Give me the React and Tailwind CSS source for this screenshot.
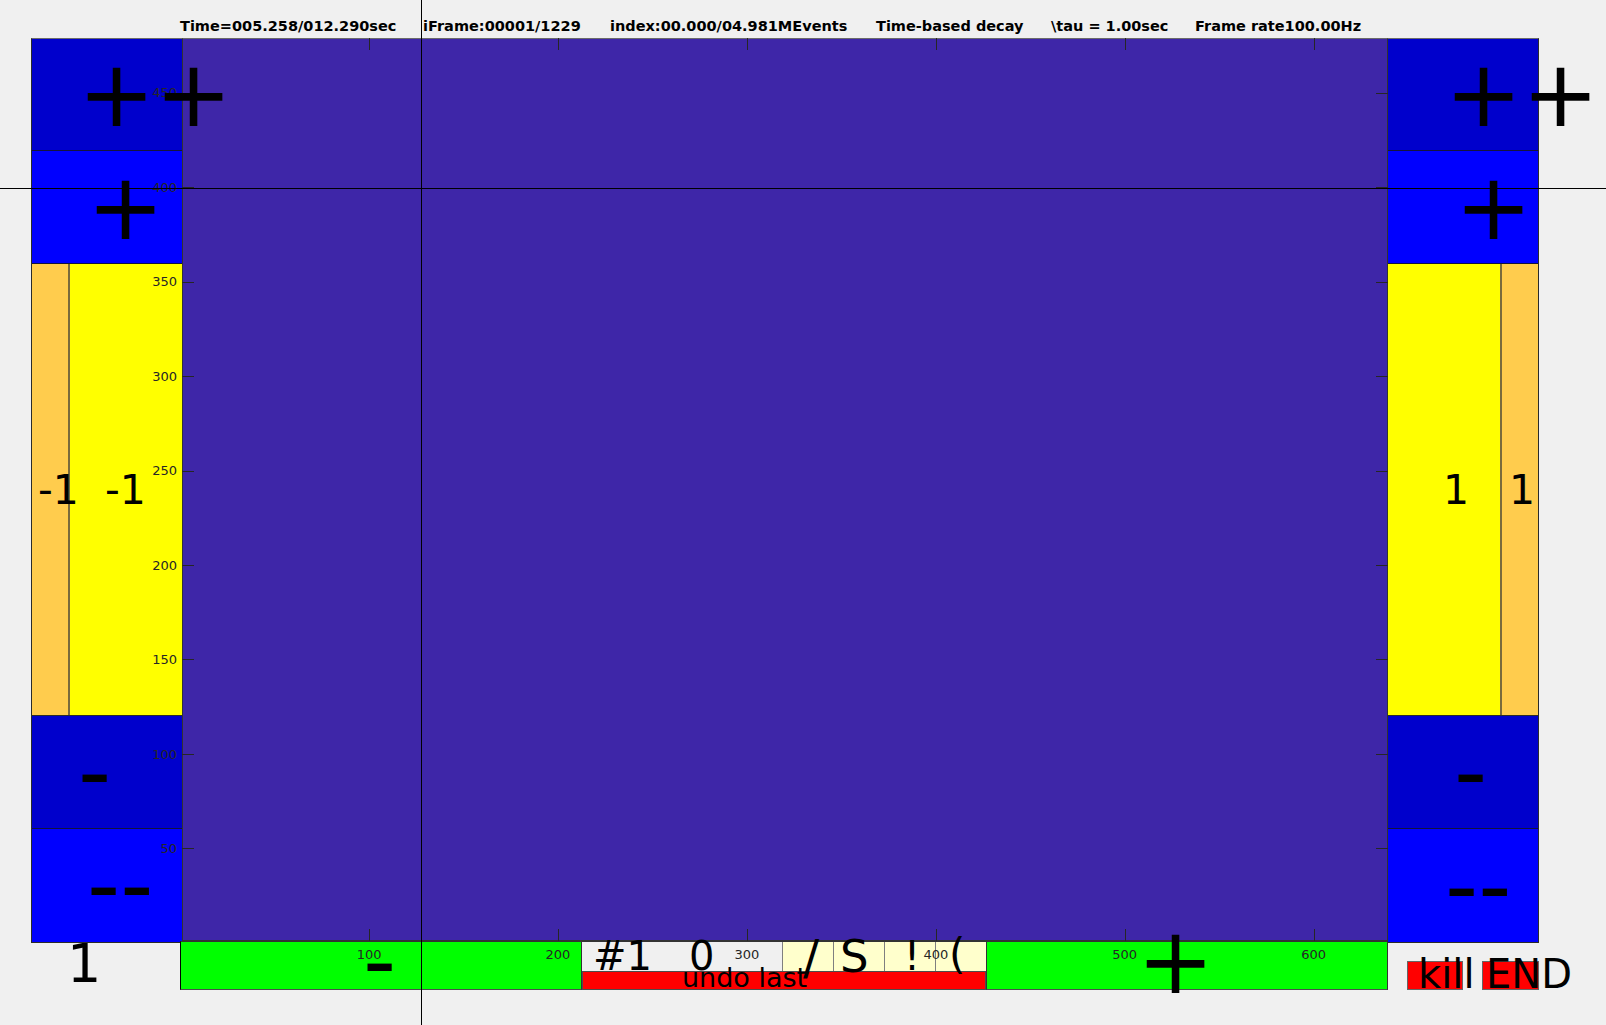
import React from "react";

// couleurs de la figure (style MATLAB)
const AXIS = "#262626";
const yTicks = [50, 100, 150, 200, 250, 300, 350, 400, 450];
const xTicks = [100, 200, 300, 400, 500, 600];
const ty = (v) => 942.7 - 1.8887 * v;
const tx = (v) => 180.2 + 1.889 * v;

// grand texte d'annotation, dessiné par-dessus les voisins
const Glyph = ({ className, children }) => (
  <span className={"relative z-10 whitespace-pre leading-none " + className}>{children}</span>
);

function Ticks() {
  return (
    <svg className="pointer-events-none absolute left-0 top-0" width="1606" height="1025">
      <g stroke={AXIS} strokeWidth="1" shapeRendering="crispEdges">
        {yTicks.map((v) => {
          const y = Math.round(ty(v)) + 0.5;
          return (
            <g key={v}>
              <line x1="182" x2="194" y1={y} y2={y} />
              <line x1="1376" x2="1388" y1={y} y2={y} />
            </g>
          );
        })}
        {xTicks.map((v) => {
          const x = Math.round(tx(v)) + 0.5;
          return (
            <g key={v}>
              <line x1={x} x2={x} y1="38" y2="50" />
              <line x1={x} x2={x} y1="929" y2="941" />
            </g>
          );
        })}
      </g>
      <g fill={AXIS} fontFamily="DejaVu Sans" fontSize="13">
        {yTicks.map((v) => (
          <text key={v} x="177" y={ty(v) + 4.7} textAnchor="end">
            {v}
          </text>
        ))}
        {xTicks.map((v) => (
          <text key={v} x={tx(v)} y="959" textAnchor="middle">
            {v}
          </text>
        ))}
      </g>
    </svg>
  );
}

function LeftPanel() {
  return (
    <div className="flex h-[905px] w-[151px] flex-col border-y border-l border-[#2b2b2b] border-t-[#6b6b6b]">
      <div className="flex h-[112px] items-start border-b border-[#14143c] bg-[#0000cc] pl-[46px] pt-[10px]">
        <Glyph className="text-[92px]">++</Glyph>
      </div>
      <div className="flex h-[113px] items-start border-b border-[#14143c] bg-[#0000ff] pl-[55px] pt-[11px]">
        <Glyph className="text-[92px]">+</Glyph>
      </div>
      <div className="flex h-[452px] border-b border-[#2b2b2b]">
        <div className="flex w-[36px] items-start bg-[#ffcc4d] pl-[6px] pt-[206px]">
          <Glyph className="text-[41px]">-1</Glyph>
        </div>
        <div className="w-[2px] bg-[#7a6a3c]" />
        <div className="flex w-[112px] items-start bg-[#ffff00] pl-[35px] pt-[206px]">
          <Glyph className="text-[41px]">-1</Glyph>
        </div>
      </div>
      <div className="flex h-[113px] items-start border-b border-[#14143c] bg-[#0000cc] pl-[46px] pt-[11px]">
        <Glyph className="text-[92px]">-</Glyph>
      </div>
      <div className="flex h-[113px] items-start bg-[#0000ff] pl-[55px] pt-[11px]">
        <Glyph className="text-[92px]">--</Glyph>
      </div>
    </div>
  );
}

function RightPanel() {
  return (
    <div className="flex h-[905px] w-[151px] flex-col border-y border-r border-[#2b2b2b] border-t-[#6b6b6b]">
      <div className="flex h-[112px] items-start border-b border-[#14143c] bg-[#0000cc] pl-[57px] pt-[10px]">
        <Glyph className="text-[92px]">++</Glyph>
      </div>
      <div className="flex h-[113px] items-start border-b border-[#14143c] bg-[#0000ff] pl-[67px] pt-[11px]">
        <Glyph className="text-[92px]">+</Glyph>
      </div>
      <div className="flex h-[452px] border-b border-[#2b2b2b]">
        <div className="flex w-[112px] items-start bg-[#ffff00] pl-[55px] pt-[206px]">
          <Glyph className="text-[41px]">1</Glyph>
        </div>
        <div className="w-[2px] bg-[#7a6a3c]" />
        <div className="flex w-[36px] items-start bg-[#ffcc4d] pl-[7px] pt-[206px]">
          <Glyph className="text-[41px]">1</Glyph>
        </div>
      </div>
      <div className="flex h-[113px] items-start border-b border-[#14143c] bg-[#0000cc] pl-[66px] pt-[11px]">
        <Glyph className="text-[92px]">-</Glyph>
      </div>
      <div className="flex h-[113px] items-start bg-[#0000ff] pl-[57px] pt-[12px]">
        <Glyph className="text-[92px]">--</Glyph>
      </div>
    </div>
  );
}

export default function App() {
  return (
    <div className="relative h-[1025px] w-[1606px] overflow-hidden bg-[#f0f0f0] font-['DejaVu_Sans',sans-serif] text-black">
      {/* titre */}
      <div className="flex h-[38px] whitespace-nowrap pl-[180px] pt-[19px] text-[14.5px] font-bold leading-none">
        <span className="w-[243px]">Time=005.258/012.290sec</span>
        <span className="w-[187px]">iFrame:00001/1229</span>
        <span className="w-[266px]">index:00.000/04.981MEvents</span>
        <span className="w-[175px]">Time-based decay</span>
        <span className="w-[144px]">\tau = 1.00sec</span>
        <span>Frame rate100.00Hz</span>
      </div>

      {/* panneaux + axes */}
      <div className="flex h-[903px] pl-[31px]">
        <LeftPanel />
        <div className="h-[903px] w-[1206px] border border-[#333] border-t-[#6b6b6b] bg-[#3e26a8]" />
        <RightPanel />
      </div>

      {/* barre du bas */}
      <div className="flex h-[49px]">
        <div className="flex w-[180px] items-start pl-[67px]">
          <Glyph className="-mt-[4px] text-[54px]">1</Glyph>
        </div>
        <div className="flex h-[49px] w-[402px] items-start border border-[#333] border-l-black border-b-[#4d4d4d] bg-[#00ff00] pl-[182px]">
          <Glyph className="-mt-[26px] text-[92px]">-</Glyph>
        </div>
        <div className="flex h-[49px] w-[404px] flex-col">
          <div className="flex h-[30px] border-t border-[#333]">
            <div className="flex w-[201px] items-start border-r border-[#7f7f7f] bg-[#f0f0f0] pl-[11px]">
              <Glyph className="-mt-[6px] text-[40px]">#1</Glyph>
              <Glyph className="-mt-[6px] ml-[37px] text-[40px]">0</Glyph>
            </div>
            <div className="flex w-[51px] items-start border-r border-[#7f7f7f] bg-[#ffffcc] pl-[20px]">
              <Glyph className="-mt-[9px] text-[48px]">/</Glyph>
            </div>
            <div className="flex w-[51px] items-start border-r border-[#7f7f7f] bg-[#ffffcc] pl-[6px]">
              <Glyph className="-mt-[8px] text-[45px]">S</Glyph>
            </div>
            <div className="flex w-[51px] items-start border-r border-[#7f7f7f] bg-[#ffffcc] pl-[19px]">
              <Glyph className="-mt-[6px] text-[40px]">!</Glyph>
            </div>
            <div className="flex w-[50px] items-start bg-[#ffffcc] pl-[13px]">
              <Glyph className="-mt-[8px] text-[42px]">(</Glyph>
            </div>
          </div>
          <div className="flex h-[19px] items-start border border-[#4d4d4d] bg-[#ff0000] pl-[99px]">
            <Glyph className="-mt-[8px] text-[27px]">undo last</Glyph>
          </div>
        </div>
        <div className="flex h-[49px] w-[402px] items-start border border-[#333] border-b-[#4d4d4d] bg-[#00ff00] pl-[150px]">
          <Glyph className="-mt-[26px] text-[92px]">+</Glyph>
        </div>
        <div className="ml-[19px] flex h-[29px] w-[56px] items-start self-end border border-[#666] bg-[#ff0000] pl-[10px]">
          <Glyph className="-mt-[8px] text-[40px]">kill</Glyph>
        </div>
        <div className="ml-[19px] flex h-[29px] w-[57px] items-start self-end border border-[#666] bg-[#ff0000] pl-[3px]">
          <Glyph className="-mt-[8px] text-[40px]">END</Glyph>
        </div>
      </div>

      <Ticks />

      {/* réticule */}
      <div className="pointer-events-none absolute left-[421px] top-0 z-20 h-[1025px] w-px bg-black" />
      <div className="pointer-events-none absolute left-0 top-[188px] z-20 h-px w-[1606px] bg-black" />
    </div>
  );
}
